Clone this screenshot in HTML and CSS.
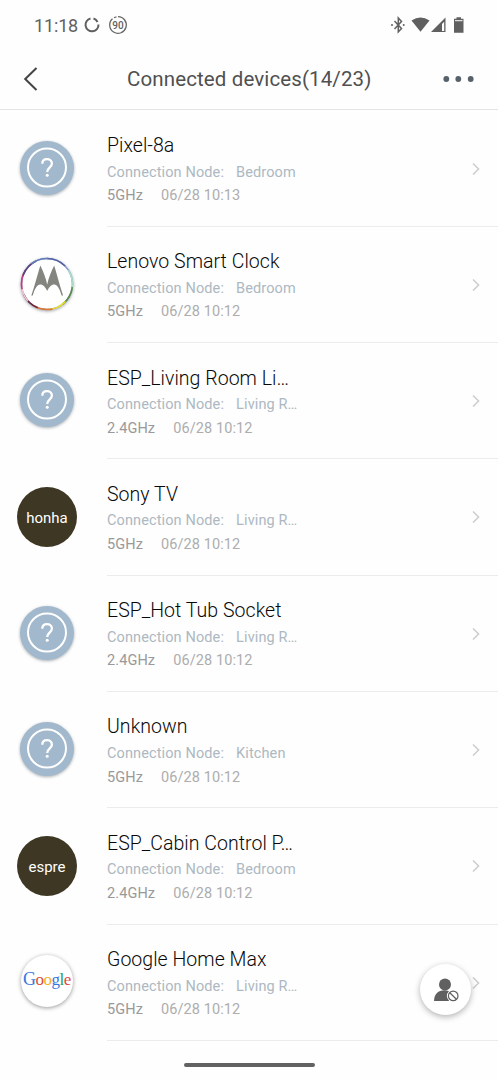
FILE: index.html
```
<!DOCTYPE html>
<html lang="en">
<head>
<meta charset="utf-8">
<title>Connected devices</title>
<link rel="stylesheet" href="styles.css">
</head>
<body>
<svg class="defs" aria-hidden="true">
  <symbol id="unknown" viewBox="0 0 60 60">
    <circle cx="30" cy="30" r="27" fill="#a1b8cd"/>
    <circle cx="30" cy="29.500" r="19" fill="none" stroke="#fff" stroke-width="2"/>
    <path d="M25.300 25.700c0-3 2-4.600 4.700-4.600s4.900 1.600 4.900 4.500c0 4-4.700 4.200-4.700 8.300" fill="none" stroke="#fff" stroke-width="2.300"/>
    <circle cx="30.200" cy="37.200" r="1.500" fill="#fff"/>
  </symbol>
  <symbol id="chevron" viewBox="0 0 10 14">
    <path d="M2 1.500l5.600 5.500L2 12.500" fill="none" stroke="#cccccc" stroke-width="1.500"/>
  </symbol>
</svg>
<div class="screen">
  <div class="status">
    <span class="clock">11:18</span>
    <svg class="sync" width="18" height="18" viewBox="0 0 18 18"><path d="M10.500 2.500A6.500 6.500 0 0 1 14.500 6M15.500 8.500A6.500 6.500 0 1 1 7.500 2.500" fill="none" stroke="#5f5f5f" stroke-width="2"/></svg>
    <span class="level"><svg width="20" height="20" viewBox="0 0 20 20"><path d="M10 1.700a8.300 8.300 0 1 1-5.500 2.100M6 2.700a8.300 8.300 0 0 1 2.500-.9" fill="none" stroke="#666" stroke-width="1.300"/></svg><b>90</b></span>
    <span class="spacer"></span>
    <svg width="76" height="18" viewBox="0 0 76 18">
      <path d="M4.500 5l7 7.500-3.200 3.400V2l3.200 3.400-7 7.500" fill="none" stroke="#606060" stroke-width="1.500"/>
      <circle cx="2" cy="9" r="1" fill="#606060"/><circle cx="13.700" cy="9" r="1" fill="#606060"/>
      <path d="M21.500 4.600Q30.500-1.500 39.500 4.600L30.500 15.700z" fill="#606060"/>
      <path d="M41 16L55.500 1.500V16z" fill="#606060"/><path d="M52 8l2.200-2.300V15H52z" fill="#fff"/>
      <path d="M66.500 1.300h4.500v1.500h2.500v14h-9.500V2.800h2.500z" fill="#606060"/><path d="M65 4.200h7.500v1H65z" fill="#fff"/>
    </svg>
  </div>
  <header class="bar">
    <svg class="back" width="16" height="26" viewBox="0 0 16 26"><path d="M13.500 2L2.200 13l11.300 11" fill="none" stroke="#444" stroke-width="2"/></svg>
    <h1>Connected devices(14/23)</h1>
    <svg class="more" width="32" height="8" viewBox="0 0 32 8"><g fill="#56616a"><circle cx="3.300" cy="4" r="2.900"/><circle cx="15.300" cy="4" r="2.900"/><circle cx="27.700" cy="4" r="2.900"/></g></svg>
  </header>
  <main class="list">
    <article class="row">
      <svg class="avatar glow"><use href="#unknown"/></svg>
      <div class="body"><h2>Pixel-8a</h2><p class="node"><span>Connection Node:</span><span>Bedroom</span></p><p class="meta"><span class="band">5GHz</span><span>06/28 10:13</span></p></div>
      <svg class="chev"><use href="#chevron"/></svg>
    </article>
    <article class="row">
      <svg class="avatar glow" viewBox="0 0 60 60">
        <circle cx="30" cy="30" r="26.200" fill="#fff"/>
        <g fill="none" stroke-width="1.600" transform="rotate(-90 30 30)">
          <circle cx="30" cy="30" r="25.500" stroke="#8997c8"/>
          <g stroke-dasharray="20 141">
            <circle cx="30" cy="30" r="25.500" stroke="#5360a4"/>
            <circle cx="30" cy="30" r="25.500" stroke="#a8dcc9" stroke-dashoffset="-25"/>
            <circle cx="30" cy="30" r="25.500" stroke="#598b44" stroke-dashoffset="-43"/>
            <circle cx="30" cy="30" r="25.500" stroke="#e8df22" stroke-dashoffset="-59"/>
            <circle cx="30" cy="30" r="25.500" stroke="#dc7836" stroke-dashoffset="-74"/>
            <circle cx="30" cy="30" r="25.500" stroke="#702a46" stroke-dashoffset="-89"/>
            <circle cx="30" cy="30" r="25.500" stroke="#f0c5d1" stroke-dashoffset="-101"/>
            <circle cx="30" cy="30" r="25.500" stroke="#c63a83" stroke-dashoffset="-114"/>
            <circle cx="30" cy="30" r="25.500" stroke="#59417d" stroke-dashoffset="-128"/>
            <circle cx="30" cy="30" r="25.500" stroke="#667dbc" stroke-dashoffset="-142"/>
          </g>
        </g>
        <path d="M14.300 41.500C17.500 32 20.500 21 23.300 11.500c3 6 5.500 12 6.900 19C31.600 23.500 34.200 17.500 37.200 11.500c2.800 9.500 5.800 20.500 8.900 30h-1.500c-2-7-4.300-11-7.400-11-3 0-5 2.500-7 6.500-2-4-4-6.500-7-6.500-3.100 0-5.400 4-7.400 11z" fill="#858580"/>
      </svg>
      <div class="body"><h2>Lenovo Smart Clock</h2><p class="node"><span>Connection Node:</span><span>Bedroom</span></p><p class="meta"><span class="band">5GHz</span><span>06/28 10:12</span></p></div>
      <svg class="chev"><use href="#chevron"/></svg>
    </article>
    <article class="row">
      <svg class="avatar glow"><use href="#unknown"/></svg>
      <div class="body"><h2>ESP_Living Room Li…</h2><p class="node"><span>Connection Node:</span><span>Living R…</span></p><p class="meta"><span class="band">2.4GHz</span><span>06/28 10:12</span></p></div>
      <svg class="chev"><use href="#chevron"/></svg>
    </article>
    <article class="row">
      <div class="avatar dark">honha</div>
      <div class="body"><h2>Sony TV</h2><p class="node"><span>Connection Node:</span><span>Living R…</span></p><p class="meta"><span class="band">5GHz</span><span>06/28 10:12</span></p></div>
      <svg class="chev"><use href="#chevron"/></svg>
    </article>
    <article class="row">
      <svg class="avatar glow"><use href="#unknown"/></svg>
      <div class="body"><h2>ESP_Hot Tub Socket</h2><p class="node"><span>Connection Node:</span><span>Living R…</span></p><p class="meta"><span class="band">2.4GHz</span><span>06/28 10:12</span></p></div>
      <svg class="chev"><use href="#chevron"/></svg>
    </article>
    <article class="row">
      <svg class="avatar glow"><use href="#unknown"/></svg>
      <div class="body"><h2>Unknown</h2><p class="node"><span>Connection Node:</span><span>Kitchen</span></p><p class="meta"><span class="band">5GHz</span><span>06/28 10:12</span></p></div>
      <svg class="chev"><use href="#chevron"/></svg>
    </article>
    <article class="row">
      <div class="avatar dark">espre</div>
      <div class="body"><h2>ESP_Cabin Control P…</h2><p class="node"><span>Connection Node:</span><span>Bedroom</span></p><p class="meta"><span class="band">2.4GHz</span><span>06/28 10:12</span></p></div>
      <svg class="chev"><use href="#chevron"/></svg>
    </article>
    <article class="row">
      <div class="avatar google"><div class="disc"><span class="b">G</span><span class="r">o</span><span class="y">o</span><span class="b">g</span><span class="g">l</span><span class="r">e</span></div></div>
      <div class="body"><h2>Google Home Max</h2><p class="node"><span>Connection Node:</span><span>Living R…</span></p><p class="meta"><span class="band">5GHz</span><span>06/28 10:12</span></p></div>
      <svg class="chev"><use href="#chevron"/></svg>
    </article>
  </main>
  <footer class="nav"><div class="handle"></div></footer>
  <button class="fab" aria-label="Blocked devices">
    <svg width="28" height="26" viewBox="0 0 28 26">
      <g fill="#606060"><circle cx="13" cy="7.500" r="6"/><path d="M2 24C2.200 17 6.200 13.300 12.200 13.300c6.500 0 9.500 4 9.500 10.700z"/></g>
      <circle cx="21.200" cy="18.900" r="6.300" fill="#fff"/>
      <circle cx="21.200" cy="18.900" r="4.800" fill="none" stroke="#606060" stroke-width="1.200"/><path d="M17.800 15.700l6.600 6.500" stroke="#606060" stroke-width="1.200"/>
    </svg>
  </button>
</div>
</body>
</html>
```

FILE: styles.css
```
* { box-sizing: border-box; }
body { margin: 0; background: #fefefe; font-family: Roboto, "Liberation Sans", sans-serif; }
h1, h2, p { margin: 0; font-weight: 400; }
.defs { position: absolute; width: 0; height: 0; }
.screen { position: relative; width: 498px; height: 1080px; overflow: hidden; display: flex; flex-direction: column; }
.status { height: 49px; flex: none; display: flex; align-items: center; padding: 1px 32px 0 34px; color: #616161; }
.clock { font-size: 18px; letter-spacing: -.15px; width: 49px; white-space: nowrap; }
.level { display: grid; place-items: center; margin-left: 7px; }
.level > * { grid-area: 1 / 1; }
.level b { font-size: 10px; font-weight: 500; }
.spacer { flex: 1; }
.bar { height: 61px; flex: none; display: flex; align-items: center; padding: 0 23px; border-bottom: 1px solid #e4e4e4; }
.bar h1 { flex: 1; padding-left: 88px; font-size: 20.500px; letter-spacing: .12px; color: #505050; white-space: nowrap; }
.list { padding-top: .6px; }
.row { height: 116.300px; display: flex; }
.avatar { width: 60px; height: 60px; margin: 27px 30px 0 17px; flex: none; border-radius: 50%; }
.glow { filter: drop-shadow(0 1px 1.500px rgba(80, 90, 100, .5)); }
.dark { display: flex; align-items: center; justify-content: center; background: #3e3723; color: #fff; font-size: 15px; padding-top: 2px; margin-top: 27.700px; }
.google { display: grid; place-items: center; margin-top: 26px; }
.disc { width: 52px; height: 52px; border-radius: 50%; background: #fff; box-shadow: 0 1px 4px rgba(0, 0, 0, .4); display: flex; justify-content: center; align-items: baseline; font: 17px/48px "Liberation Serif", serif; letter-spacing: -.500px; }
.b { color: #3876df; } .r { color: #dc4a3c; } .y { color: #efb229; } .g { color: #2a9d55; }
.disc .b:first-child { font-size: 18px; }
.body { flex: 1; min-width: 0; border-bottom: 1px solid #ececec; padding-top: 22.400px; white-space: nowrap; }
.body h2 { font-size: 19.500px; font-weight: 300; line-height: 26px; letter-spacing: .04px; color: #080808; }
.node { display: flex; gap: 12px; font-size: 14.500px; line-height: 24px; letter-spacing: .12px; color: #adb8c1; padding-top: 1.600px; }
.meta { display: flex; gap: 18px; font-size: 14.500px; line-height: 24px; letter-spacing: .1px; color: #adadad; margin-top: -.500px; }
.band { color: #999; }
.chev { width: 10px; height: 14px; margin: 51px 17px 0 -27px; flex: none; }
.nav { flex: 1; display: flex; justify-content: center; padding-top: 22.400px; }
.handle { width: 131px; height: 4px; border-radius: 2px; background: #626262; }
.fab { position: absolute; left: 420px; top: 964px; width: 51px; height: 51px; border: 0; border-radius: 50%; background: #fff; box-shadow: 0 2px 6px rgba(0, 0, 0, .3); display: grid; place-items: center; padding: 0; }
```
